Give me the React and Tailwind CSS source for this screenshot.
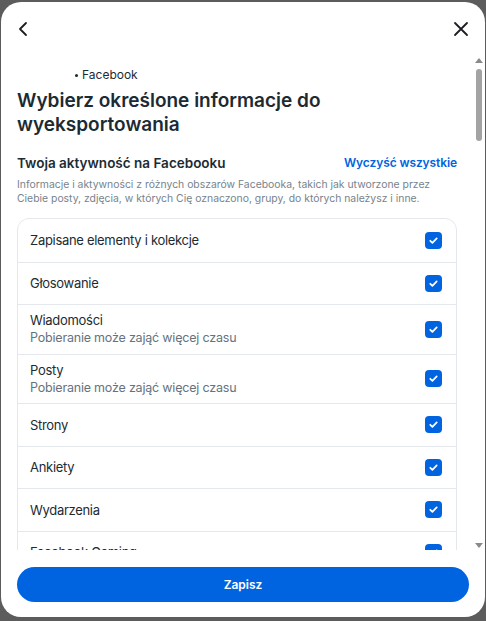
// Eksport informacji: wybór kategorii aktywności na Facebooku

const items = [
  { label: "Zapisane elementy i kolekcje" },
  { label: "Głosowanie" },
  { label: "Wiadomości", note: "Pobieranie może zająć więcej czasu" },
  { label: "Posty", note: "Pobieranie może zająć więcej czasu" },
  { label: "Strony" },
  { label: "Ankiety" },
  { label: "Wydarzenia" },
  { label: "Facebook Gaming" },
  { label: "Grupy" },
];

// ─── Checkbox ─────────────────────────────────────────────────────────────────
function Check() {
  return (
    <span className="w-[17px] h-[17px] rounded-[4px] bg-[#0064e0] flex items-center justify-center shrink-0">
      <svg width="11" height="11" viewBox="0 0 12 12" fill="none">
        <path d="M2.5 6.3l2.3 2.2L9.5 3.6" stroke="white" strokeWidth="1.9" strokeLinecap="round" strokeLinejoin="round" />
      </svg>
    </span>
  );
}

function Row({ item, first }) {
  return (
    <div className={`flex items-center justify-between pl-3 pr-[14px] ${
      item.note ? "h-[49.5px]" : "h-[42.5px]"
    } ${first ? "" : "border-t border-[#e4e8ec]"}`}>
      <div className="flex flex-col">
        <span className="text-[13px] leading-[18px] tracking-[-0.3px] text-[#1c2b33]">{item.label}</span>
        {item.note && (
          <span className="text-[12.5px] leading-[18px] tracking-[-0.2px] text-[#65737e]">{item.note}</span>
        )}
      </div>
      <Check />
    </div>
  );
}

// ─── Fake scrollbar ───────────────────────────────────────────────────────────
function Scrollbar() {
  return (
    <div className="w-[10px] shrink-0 flex flex-col items-center pt-[3px] pb-[2px]">
      <span className="w-0 h-0 border-x-[4px] border-x-transparent border-b-[5px] border-b-[#8a8a8a]" />
      <div className="w-[6px] h-[72px] mt-[6px] rounded-full bg-[#a3a3a3]" />
      <div className="flex-1" />
      <span className="w-0 h-0 border-x-[4px] border-x-transparent border-t-[5px] border-t-[#8a8a8a]" />
    </div>
  );
}

export default function App() {
  return (
    <div
      className="w-[486px] h-[621px] bg-[#5c5c5c] pt-[2px] pl-[1px] overflow-hidden"
      style={{ fontFamily: "Inter, 'Noto Sans', sans-serif" }}
    >
      <div className="w-[484px] h-[615px] bg-white rounded-[20px] flex flex-col overflow-hidden">
        {/* Header */}
        <div className="h-[53px] shrink-0 flex items-center justify-between pl-[16px] pr-[16px]">
          <svg width="12" height="16" viewBox="0 0 12 16" fill="none">
            <path d="M9 2L3 8l6 6" stroke="#1c1e21" strokeWidth="1.8" strokeLinecap="round" strokeLinejoin="round" />
          </svg>
          <svg width="16" height="16" viewBox="0 0 16 16" fill="none">
            <path d="M2 2l12 12M14 2L2 14" stroke="#1c1e21" strokeWidth="1.8" strokeLinecap="round" />
          </svg>
        </div>

        {/* Scrollable body */}
        <div className="flex h-[495px] shrink-0 pr-[1px]">
          <div className="flex-1 overflow-hidden pl-[16px] pr-[17px]">
            <div className="pt-[11px] pl-[58px] flex items-center gap-[4px] text-[12px] leading-[18px] text-[#1c2b33]">
              <span className="w-[3px] h-[3px] rounded-full bg-[#1c2b33]" />
              <span>Facebook</span>
            </div>
            <h1 className="mt-[5px] text-[19px] leading-[24px] font-semibold text-[#1c2b33]">
              Wybierz określone informacje do wyeksportowania
            </h1>
            <div className="mt-[16px] flex items-center justify-between">
              <h2 className="text-[13.5px] leading-[20px] font-semibold text-[#1c2b33]">
                Twoja aktywność na Facebooku
              </h2>
              <span className="text-[12px] font-semibold tracking-[-0.1px] text-[#0064e0]">Wyczyść wszystkie</span>
            </div>
            <p className="mt-[5px] text-[10.4px] leading-[13.5px] text-[#77838c]">
              Informacje i aktywności z różnych obszarów Facebooka, takich jak utworzone przez
              Ciebie posty, zdjęcia, w których Cię oznaczono, grupy, do których należysz i inne.
            </p>
            <div className="mt-[13px] border border-[#e4e8ec] rounded-[12px]">
              {items.map((it, i) => (
                <Row key={it.label} item={it} first={i === 0} />
              ))}
            </div>
          </div>
          <Scrollbar />
        </div>

        {/* Footer */}
        <div className="flex-1 pl-[16px] pr-[16px] pt-[17px]">
          <button className="w-full h-[35px] rounded-full bg-[#0064e0] text-white text-[12px] font-semibold">
            Zapisz
          </button>
        </div>
      </div>
    </div>
  );
}
